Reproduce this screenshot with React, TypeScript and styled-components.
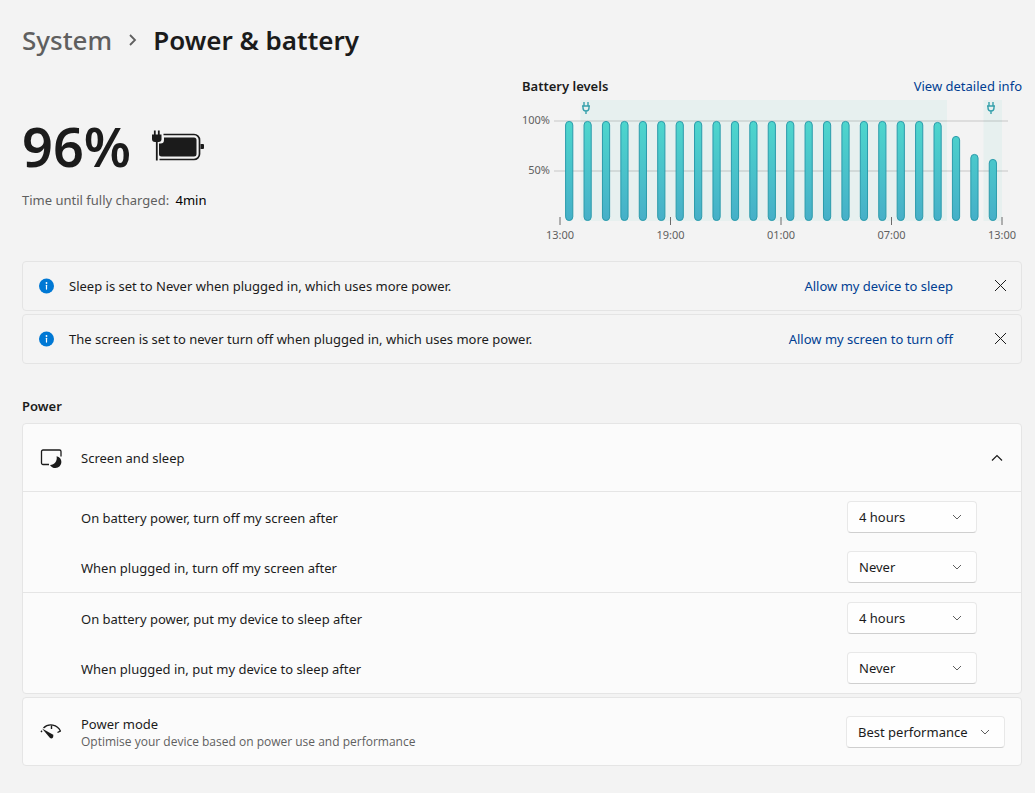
import React, { useId } from "react";
import styled, { createGlobalStyle } from "styled-components";

const GlobalStyle = createGlobalStyle`
  * { box-sizing: border-box; }
  body {
    margin: 0;
    background: #f3f3f3;
    color: #1b1b1b;
    font-family: "Noto Sans", "Open Sans", sans-serif;
    font-size: 13px;
    line-height: 20px;
  }
  h1, h2, p { margin: 0; font: inherit; }
`;

const Page = styled.main`
  padding: 20px 13px 24px 22px;
`;

const Breadcrumb = styled.nav`
  display: flex;
  align-items: center;
  gap: 15px;
  font-size: 26px;
  font-weight: 600;
  line-height: 40px;
`;

const CrumbLink = styled.a`
  color: #5f5f5f;
  font-weight: 500;
  text-decoration: none;
`;

const CrumbTitle = styled.h1``;

const Overview = styled.section`
  display: grid;
  grid-template-columns: 1fr 1fr;
  margin-top: 16px;
`;

const Charge = styled.div`
  padding-top: 34px;
`;

const ChargeLevel = styled.div`
  display: flex;
  align-items: center;
  gap: 20px;
  font-size: 54px;
  font-weight: 600;
  line-height: 72px;
`;

const ChargeNote = styled.p`
  margin-top: 8px;
  color: #5f5f5f;
`;

const Strong = styled.span`
  margin-left: 3px;
  color: #000;
`;

const ChartHead = styled.div`
  display: flex;
  justify-content: space-between;
`;

const Heading = styled.h2`
  font-weight: 600;
`;

const Link = styled.a`
  color: #003e92;
  text-decoration: none;
`;

const ChartSvg = styled.svg`
  display: block;
  width: 100%;
  margin-top: 4px;
  overflow: visible;
  font-size: 11px;
  fill: #5f5f5f;
`;

const Notices = styled.section`
  display: flex;
  flex-direction: column;
  gap: 3px;
  margin-top: 16px;
`;

const Notice = styled.div`
  display: flex;
  align-items: center;
  height: 50px;
  padding: 0 4px 0 16px;
  border: 1px solid #e4e4e4;
  border-radius: 4px;
  background: #f4f4f4;
`;

const NoticeText = styled.p`
  flex: 1;
  margin-left: 14px;
`;

const CloseButton = styled.button`
  display: grid;
  place-items: center;
  width: 32px;
  height: 32px;
  margin-left: 32px;
  padding: 0;
  border: 0;
  background: none;
`;

const Settings = styled.section`
  margin-top: 32px;
`;

const Card = styled.div`
  margin-top: 3px;
  border: 1px solid #e5e5e5;
  border-radius: 4px;
  background: #fbfbfb;
`;

const FirstCard = styled(Card)`
  margin-top: 7px;
`;

const CardHeader = styled.div`
  display: flex;
  align-items: center;
  height: 67px;
  padding: 0 16px;
`;

const ExpandHeader = styled(CardHeader).attrs({ as: "button", type: "button" })`
  width: 100%;
  border: 0;
  background: none;
  color: inherit;
  font: inherit;
  text-align: left;
`;

const CardTitle = styled.div`
  flex: 1;
  margin-left: 18px;
`;

const Caption = styled.p`
  color: #5f5f5f;
  font-family: "Open Sans", "Noto Sans", sans-serif;
  font-size: 12px;
  line-height: 16px;
`;

const Group = styled.div`
  border-top: 1px solid #e5e5e5;
`;

const Row = styled.div`
  display: flex;
  align-items: center;
  justify-content: space-between;
  height: 50px;
  padding: 0 44px 0 58px;
`;

const RowLabel = styled.label`
  padding-top: 2px;
`;

const SelectBox = styled.div<{ $width: number }>`
  position: relative;
  width: ${(p) => p.$width}px;
`;

const Select = styled.select`
  appearance: none;
  display: block;
  width: 100%;
  height: 32px;
  padding: 0 28px 0 11px;
  border: 1px solid #e8e8e8;
  border-bottom-color: #cfcfcf;
  border-radius: 4px;
  background: #fefefe;
  color: #1b1b1b;
  font: inherit;
`;

const Chevron = styled.svg`
  position: absolute;
  top: 11px;
  right: 15px;
  pointer-events: none;
`;

const CrumbArrow = () => (
  <svg width="11" height="14" viewBox="0 0 11 14" fill="none" stroke="#5f5f5f" strokeWidth="1.8" aria-hidden="true">
    <path d="M3 2l5 5-5 5" />
  </svg>
);

const BatteryIcon = () => (
  <svg width="54" height="32" viewBox="0 0 54 32" fill="none" aria-hidden="true">
    <path d="M12.500 4.500H43a5.500 5.500 0 0 1 5.500 5.500v14a5.500 5.500 0 0 1-5.500 5.500H8.500" stroke="#1b1b1b" strokeWidth="1.700" />
    <path d="M49.500 14H52a1 1 0 0 1 1 1v3a1 1 0 0 1-1 1h-2.500z" fill="#1b1b1b" />
    <path d="M13 7.500h30a2.500 2.500 0 0 1 2.500 2.500v14a2.500 2.500 0 0 1-2.500 2.500H10.500a2.500 2.500 0 0 1-2.500-2.500V13.500h1.500a3.500 3.500 0 0 0 3.500-3.500z" fill="#1b1b1b" />
    <path d="M1 4.500h9.500v4.500a3 3 0 0 1-3 3H4a3 3 0 0 1-3-3z" fill="#1b1b1b" />
    <path d="M3.800 0.500V6M7.800 0.500V6M5.800 12v18.500" stroke="#1b1b1b" strokeWidth="1.800" />
  </svg>
);

const InfoIcon = () => (
  <svg width="16" height="16" viewBox="0 0 16 16" aria-hidden="true">
    <circle cx="7.500" cy="8" r="7.500" fill="#0078d4" />
    <circle cx="7.500" cy="5" r="0.900" fill="#fff" />
    <path d="M7.500 7.300v3.800" stroke="#fff" strokeWidth="1.200" strokeLinecap="round" />
  </svg>
);

const CloseIcon = () => (
  <svg width="12" height="12" viewBox="0 0 12 12" stroke="#1b1b1b" aria-hidden="true">
    <path d="M0 0l11 11M11 0l-11 11" />
  </svg>
);

const ScreenSleepIcon = () => (
  <svg width="24" height="24" viewBox="0 0 24 24" fill="none" aria-hidden="true">
    <path d="M10 18.500H4a1.500 1.500 0 0 1-1.500-1.500V5.500a1.500 1.500 0 0 1 1.500-1.500h16.500a1.500 1.500 0 0 1 1.500 1.500v5" stroke="#1b1b1b" strokeWidth="1.300" />
    <path d="M17.600 10.200c3 .7 4.800 3 4.800 5.900a5.900 5.900 0 0 1-5.900 5.900c-2.400 0-4.500-1.200-5.500-3.100 4 .2 7.600-3.200 6.600-8.700z" fill="#1b1b1b" />
  </svg>
);

const GaugeIcon = () => (
  <svg width="24" height="24" viewBox="0 0 24 24" fill="none" stroke="#1b1b1b" strokeWidth="1.400" aria-hidden="true">
    <path d="M4.500 8a10.500 10.500 0 0 1 17 3.200M12.500 4.500v4.500M21.800 10.800l-3.300 1.700" />
    <path d="M3 8.500l10.300 5.800a2.200 2.200 0 0 1 .7 3.100 2.200 2.200 0 0 1-3.200.4z" fill="#1b1b1b" stroke="none" />
    <path d="M2 12l1-1.200" />
  </svg>
);

const ChevronUp = () => (
  <svg width="16" height="16" viewBox="0 0 16 16" fill="none" stroke="#1b1b1b" strokeWidth="1.200" aria-hidden="true">
    <path d="M3 10.500l5-5 5 5" />
  </svg>
);

const levels = [...Array(20).fill(100), 99, 85, 67, 62];
const STEP = 18.42;
const FIRST = 47.2;
const ticks = ["13:00", "19:00", "01:00", "07:00", "13:00"];

const Plug = ({ x }: { x: number }) => (
  <g transform={`translate(${x} 2)`} fill="none" stroke="#35a0ac" strokeWidth="1.400">
    <path d="M-2 0v3.500M2 0v3.500M-4 4h8M0 9v3M-3 4v2a3 3 0 0 0 6 0v-2" />
  </g>
);

const BatteryChart = () => (
  <ChartSvg viewBox="0 0 500 145" role="img" aria-label="Battery levels over the last 24 hours">
    <defs>
      <linearGradient id="level" gradientUnits="userSpaceOnUse" x1="0" y1="21" x2="0" y2="121">
        <stop offset="0" stopColor="#4dd6cd" />
        <stop offset="1" stopColor="#46afc8" />
      </linearGradient>
    </defs>
    <path d="M58.500 0H425v121H58.500zM461.500 0H480v121h-18.500z" fill="#e7f0ef" />
    <path d="M32 21h454M32 71h454" stroke="#000" strokeOpacity="0.09" strokeWidth="2" />
    <text x="28" y="24" textAnchor="end">100%</text>
    <text x="28" y="74" textAnchor="end">50%</text>
    <Plug x={64} />
    <Plug x={469} />
    {levels.map((level, i) => (
      <rect
        key={i}
        x={FIRST + i * STEP - 3.6}
        y={121.4 - level}
        width="7.200"
        height={level - 0.9}
        rx="3.600"
        fill="url(#level)"
        stroke="#2b9bab"
      />
    ))}
    {ticks.map((label, i) => (
      <g key={i}>
        <path d={`M${38 + i * 110.5} 117v8`} stroke="#6b6b6b" />
        <text x={38 + i * 110.5} y="139" textAnchor="middle">{label}</text>
      </g>
    ))}
  </ChartSvg>
);

type DropdownProps = { id: string; value: string; options: string[]; width: number };

const Dropdown = ({ id, value, options, width }: DropdownProps) => (
  <SelectBox $width={width}>
    <Select id={id} defaultValue={value}>
      {options.map((o) => (
        <option key={o}>{o}</option>
      ))}
    </Select>
    <Chevron width="10" height="10" viewBox="0 0 10 10" fill="none" stroke="#5f5f5f" aria-hidden="true">
      <path d="M1 3l4 4 4-4" />
    </Chevron>
  </SelectBox>
);

const TimeoutRow = ({ label, value }: { label: string; value: string }) => {
  const id = useId();
  return (
    <Row>
      <RowLabel htmlFor={id}>{label}</RowLabel>
      <Dropdown id={id} value={value} options={["1 hour", "4 hours", "Never"]} width={130} />
    </Row>
  );
};

const notices = [
  ["Sleep is set to Never when plugged in, which uses more power.", "Allow my device to sleep"],
  ["The screen is set to never turn off when plugged in, which uses more power.", "Allow my screen to turn off"],
];

export default function App() {
  return (
    <>
      <GlobalStyle />
      <Page>
        <Breadcrumb aria-label="Breadcrumb">
          <CrumbLink href="#system">System</CrumbLink>
          <CrumbArrow />
          <CrumbTitle>Power &amp; battery</CrumbTitle>
        </Breadcrumb>

        <Overview>
          <Charge>
            <ChargeLevel>
              96%
              <BatteryIcon />
            </ChargeLevel>
            <ChargeNote>
              Time until fully charged: <Strong>4min</Strong>
            </ChargeNote>
          </Charge>
          <div>
            <ChartHead>
              <Heading>Battery levels</Heading>
              <Link href="#details">View detailed info</Link>
            </ChartHead>
            <BatteryChart />
          </div>
        </Overview>

        <Notices>
          {notices.map(([text, action]) => (
            <Notice key={action}>
              <InfoIcon />
              <NoticeText>{text}</NoticeText>
              <Link href="#allow">{action}</Link>
              <CloseButton type="button" aria-label="Dismiss">
                <CloseIcon />
              </CloseButton>
            </Notice>
          ))}
        </Notices>

        <Settings>
          <Heading>Power</Heading>
          <FirstCard>
            <ExpandHeader aria-expanded="true">
              <ScreenSleepIcon />
              <CardTitle>Screen and sleep</CardTitle>
              <ChevronUp />
            </ExpandHeader>
            <Group>
              <TimeoutRow label="On battery power, turn off my screen after" value="4 hours" />
              <TimeoutRow label="When plugged in, turn off my screen after" value="Never" />
            </Group>
            <Group>
              <TimeoutRow label="On battery power, put my device to sleep after" value="4 hours" />
              <TimeoutRow label="When plugged in, put my device to sleep after" value="Never" />
            </Group>
          </FirstCard>
          <Card>
            <CardHeader>
              <GaugeIcon />
              <CardTitle>
                <label htmlFor="power-mode">Power mode</label>
                <Caption>Optimise your device based on power use and performance</Caption>
              </CardTitle>
              <Dropdown
                id="power-mode"
                value="Best performance"
                options={["Best power efficiency", "Balanced", "Best performance"]}
                width={159}
              />
            </CardHeader>
          </Card>
        </Settings>
      </Page>
    </>
  );
}
